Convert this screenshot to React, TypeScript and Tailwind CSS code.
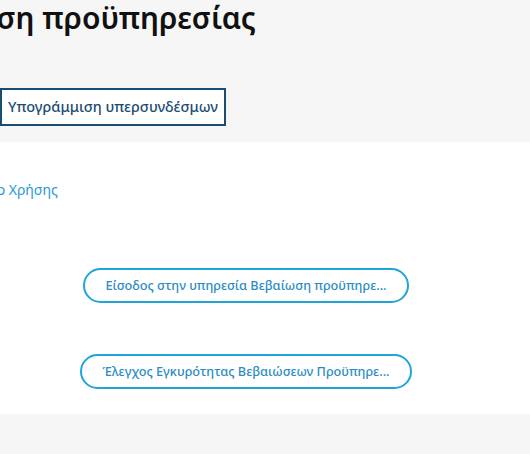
const pills = [
  'Είσοδος στην υπηρεσία Βεβαίωση προϋπηρεσίας',
  'Έλεγχος Εγκυρότητας Βεβαιώσεων Προϋπηρεσίας',
];

// cut long labels like the portal does
const shorten = (s: string) => (s.length > 39 ? s.slice(0, 39) + '...' : s);

export default function App() {
  return (
    <div className="w-[530px] h-[454px] overflow-hidden bg-[#f6f6f6] font-['Noto_Sans',sans-serif]">
      <div className="flex flex-col">
        <h1 className="text-[30px] leading-[36px] font-semibold text-[#111] whitespace-nowrap -ml-[112px]">
          Βεβαίωση προϋπηρεσίας
        </h1>

        <div className="mt-[52px] flex">
          <button className="h-[38px] px-[6px] border-2 border-[#1b4c72] bg-white text-[14.5px] font-medium text-[#1b4c72] whitespace-nowrap">
            Υπογράμμιση υπερσυνδέσμων
          </button>
        </div>

        <div className="mt-[16px] h-[272px] bg-white">
          <div className="pt-[35px] -ml-[63px]">
            <a className="text-[14px] leading-[20px] text-[#1f9ad6] whitespace-nowrap">Εγχειρίδιο Χρήσης</a>
          </div>

          <div className="w-[492px] flex flex-col items-center gap-[51px] mt-[67px]">
            {pills.map((p) => (
              <button
                key={p}
                className="h-[35px] px-[20px] rounded-full border-2 border-[#1fa5db] text-[12.7px] font-medium text-[#2a8cc3] whitespace-nowrap"
              >
                {shorten(p)}
              </button>
            ))}
          </div>
        </div>
      </div>
    </div>
  );
}
